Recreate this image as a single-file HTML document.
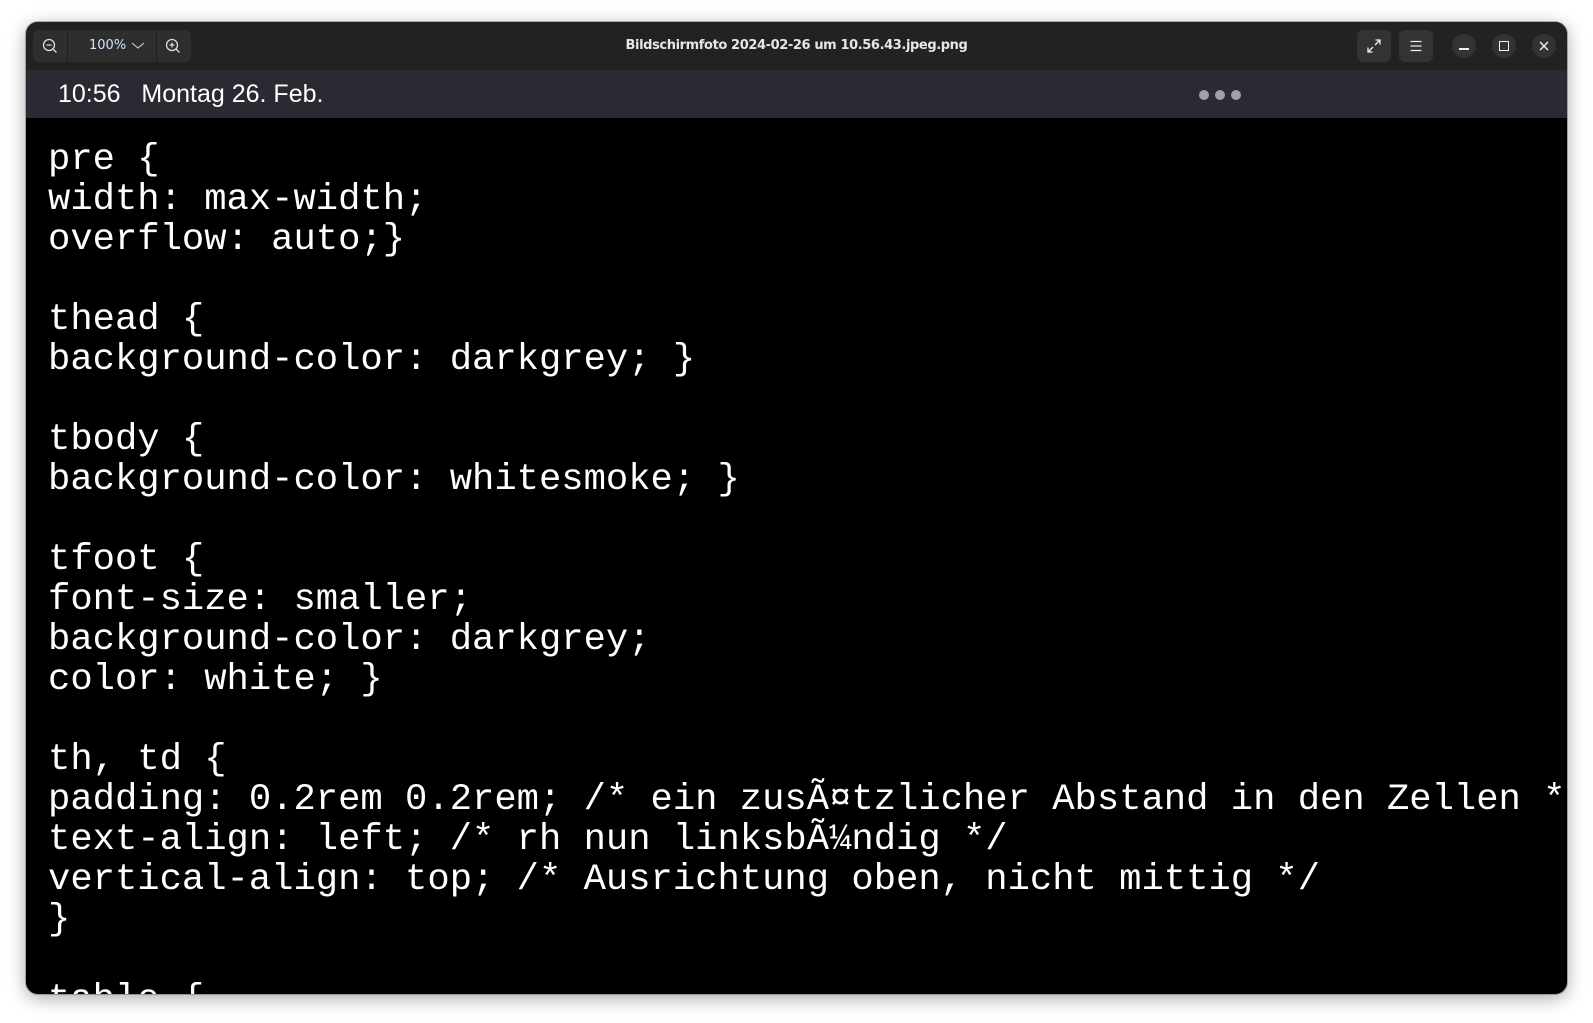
<!DOCTYPE html>
<html><head><meta charset="utf-8"><style>
html,body{margin:0;padding:0;background:#fff;width:1593px;height:1023px;overflow:hidden}
.win{position:absolute;left:26px;top:22px;width:1541px;height:972px;border-radius:12px;overflow:hidden;background:#000;box-shadow:0 4px 18px rgba(0,0,0,.35),0 0 0 1px rgba(0,0,0,.25)}
.tb{position:absolute;left:0;top:0;width:100%;height:48px;background:#222222;border-bottom:1px solid #111}
.title{position:absolute;left:0;right:0;top:16px;text-align:center;color:#e6e6e6;font:bold 13px "DejaVu Sans","Liberation Sans",sans-serif;letter-spacing:-0.4px}
.zg{position:absolute;left:7px;top:8px;width:158px;height:32px;background:#2e2e2e;border-radius:6px}
.zg .sep{position:absolute;top:0;width:1px;height:32px;background:#1e1e1e}
.zg .pct{position:absolute;left:56px;top:8px;color:#cfe3ff;font:13px "DejaVu Sans","Liberation Sans",sans-serif}
.btn{position:absolute;top:8px;width:34px;height:32px;background:#333;border-radius:6px}
.cir{position:absolute;top:12px;width:24px;height:24px;border-radius:50%;background:#333}
.sb{position:absolute;left:0;top:48px;width:100%;height:48px;background:#2b2a33}
.time{position:absolute;left:32px;top:10px;color:#fff;font:25px "Liberation Sans",sans-serif;white-space:pre}
.dot{position:absolute;top:20px;width:10px;height:10px;border-radius:50%;background:#a09fae}
pre{position:absolute;left:22px;top:118px;margin:0;color:#fff;font:37.2px/40px "Liberation Mono",monospace;white-space:pre}
</style></head><body>
<div class="win">
 <div class="tb">
  <div class="zg">
   <svg style="position:absolute;left:9px;top:8px" width="16" height="16" viewBox="0 0 16 16" fill="none" stroke="#ddd" stroke-width="1.3"><circle cx="7" cy="7" r="5.5"/><path d="M4.5 7h5M11 11l3.5 3.5"/></svg>
   <div class="sep" style="left:34px"></div>
   <div class="pct">100%</div>
   <svg style="position:absolute;left:98px;top:12px" width="14" height="8" viewBox="0 0 14 8" fill="none" stroke="#ccc" stroke-width="1.1"><path d="M1 1l6 5 6-5"/></svg>
   <div class="sep" style="left:123px"></div>
   <svg style="position:absolute;left:132px;top:8px" width="16" height="16" viewBox="0 0 16 16" fill="none" stroke="#ddd" stroke-width="1.3"><circle cx="7" cy="7" r="5.5"/><path d="M4.5 7h5M7 4.5v5M11 11l3.5 3.5"/></svg>
  </div>
  <div class="title">Bildschirmfoto 2024-02-26 um 10.56.43.jpeg.png</div>
  <div class="btn" style="left:1331px"><svg style="position:absolute;left:9px;top:8px" width="16" height="16" viewBox="0 0 16 16" fill="none" stroke="#eee" stroke-width="1.3"><path d="M2 14l5-5M2 9.5V14h4.5M14 2L9 7M9.5 2H14v4.5"/></svg></div>
  <div class="btn" style="left:1373px"><svg style="position:absolute;left:9px;top:8px" width="16" height="16" viewBox="0 0 16 16" fill="none" stroke="#eee" stroke-width="1.2"><path d="M2.5 3.5h11M2.5 8h11M2.5 12.5h11"/></svg></div>
  <div class="cir" style="left:1426px"><div style="position:absolute;left:7px;top:14px;width:10px;height:1.5px;background:#eee"></div></div>
  <div class="cir" style="left:1466px"><div style="position:absolute;left:7px;top:7px;width:8px;height:8px;border:1.4px solid #eee"></div></div>
  <div class="cir" style="left:1506px"><svg style="position:absolute;left:6px;top:6px" width="12" height="12" viewBox="0 0 12 12" stroke="#eee" stroke-width="1.5"><path d="M2 2l8 8M10 2l-8 8"/></svg></div>
 </div>
 <div class="sb">
  <div class="time">10:56   Montag 26. Feb.</div>
  <div class="dot" style="left:1173px"></div><div class="dot" style="left:1189px"></div><div class="dot" style="left:1205px"></div>
 </div>
<pre>pre {
width: max-width;
overflow: auto;}

thead {
background-color: darkgrey; }

tbody {
background-color: whitesmoke; }

tfoot {
font-size: smaller;
background-color: darkgrey;
color: white; }

th, td {
padding: 0.2rem 0.2rem; /* ein zusÃ¤tzlicher Abstand in den Zellen */
text-align: left; /* rh nun linksbÃ¼ndig */
vertical-align: top; /* Ausrichtung oben, nicht mittig */
}

table {</pre>
</div>
</body></html>
